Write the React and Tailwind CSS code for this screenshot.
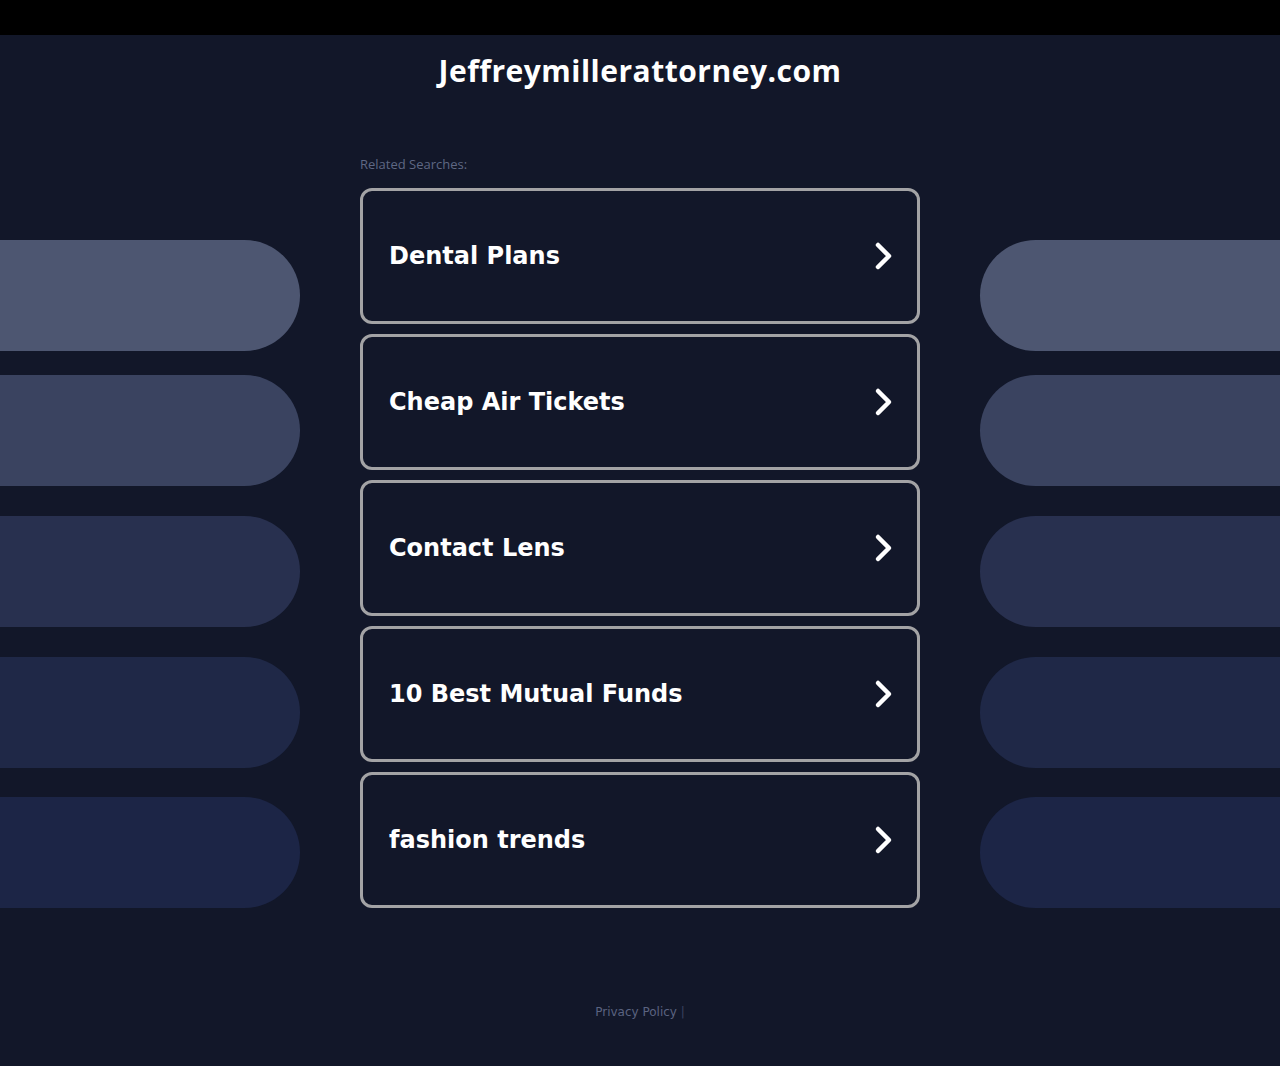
import React from 'react';

const searches = ['Dental Plans', 'Cheap Air Tickets', 'Contact Lens', '10 Best Mutual Funds', 'fashion trends'];

// decorative pills on both sides, top margin + colour
const pills = [
  { mt: 'mt-[205px]', bg: 'bg-[#4d5671]' },
  { mt: 'mt-[24px]', bg: 'bg-[#3a4360]' },
  { mt: 'mt-[30px]', bg: 'bg-[#28304f]' },
  { mt: 'mt-[30px]', bg: 'bg-[#1f2847]' },
  { mt: 'mt-[29px]', bg: 'bg-[#1c2546]' },
];

function Chevron() {
  return (
    <svg width="24" height="30" viewBox="0 0 24 30" fill="none">
      <polyline points="8,4 19,15 8,26" stroke="#fff" strokeWidth="4.5" strokeLinecap="round" strokeLinejoin="round" />
    </svg>
  );
}

function PillColumn({ side }) {
  return (
    <div className="flex flex-col w-[300px] shrink-0">
      {pills.map((p, i) => (
        <div
          key={i}
          className={`${p.mt} ${p.bg} h-[111px] ${side === 'left' ? 'rounded-r-full' : 'rounded-l-full'}`}
        />
      ))}
    </div>
  );
}

export default function App() {
  return (
    <div className="min-h-[1066px] bg-[#121729] font-['DejaVu_Sans',sans-serif]">
      <div className="h-[35px] bg-black" />
      <div className="flex justify-between">
        <PillColumn side="left" />
        <div className="w-[560px] flex flex-col">
          <h1 className="mt-[17px] text-center text-white text-[30px] leading-[38px] font-bold font-['Open_Sans',sans-serif] tracking-[0.5px]">
            Jeffreymillerattorney.com
          </h1>
          <div className="mt-[66px] text-[13px] leading-[16px] text-[#5f6884] font-['Open_Sans',sans-serif]">
            Related Searches:
          </div>
          <div className="mt-[16px] flex flex-col gap-[10px]">
            {searches.map(s => (
              <a
                key={s}
                href="#"
                className="h-[136px] border-[3px] border-[#a3a3a5] rounded-[12px] flex items-center justify-between pl-[26px] pr-[23px]"
              >
                <span className="text-white text-[24px] font-bold">{s}</span>
                <Chevron />
              </a>
            ))}
          </div>
        </div>
        <PillColumn side="right" />
      </div>
      <div className="mt-[96px] text-center text-[12px] leading-[16px] text-[#5b6380]">
        Privacy Policy <span className="text-[#3b4260]">|</span>
      </div>
    </div>
  );
}
